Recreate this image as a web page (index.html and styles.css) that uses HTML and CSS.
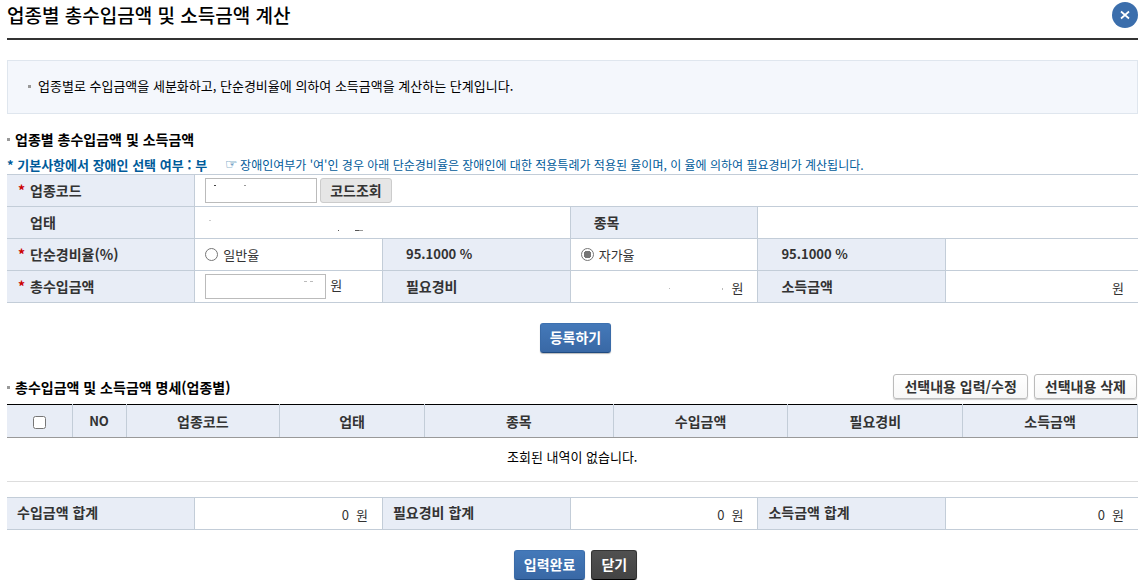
FILE: index.html
```html
<!DOCTYPE html>
<html lang="ko">
<head>
<meta charset="utf-8">
<title>업종별 총수입금액 및 소득금액 계산</title>
<link rel="stylesheet" href="styles.css">
</head>
<body>
<main class="page">
  <header class="page-header">
    <h1>업종별 총수입금액 및 소득금액 계산</h1>
    <button type="button" class="close" aria-label="닫기">
      <svg width="10" height="10" viewBox="0 0 10 10"><path d="M1 1.500L9 8.500M9 1.500L1 8.500" stroke="#fff" stroke-width="1.7" fill="none"/></svg>
    </button>
  </header>

  <div class="guide"><p>업종별로 수입금액을 세분화하고, 단순경비율에 의하여 소득금액을 계산하는 단계입니다.</p></div>

  <form>
    <h2 class="section-title">업종별 총수입금액 및 소득금액</h2>
    <p class="notice"><strong>* 기본사항에서 장애인 선택 여부 : 부</strong><span class="hand">☞</span><span>장애인여부가 '여'인 경우 아래 단순경비율은 장애인에 대한 적용특례가 적용된 율이며, 이 율에 의하여 필요경비가 계산됩니다.</span></p>

    <table class="form-table">
      <colgroup><col span="5" class="sixth"><col></colgroup>
      <tr>
        <th scope="row" class="required"><label for="code">업종코드</label></th>
        <td colspan="5"><div class="field"><input type="text" id="code" class="text code"><button type="button" class="btn lookup">코드조회</button></div></td>
      </tr>
      <tr>
        <th scope="row">업태</th>
        <td colspan="2"><svg class="trace" width="160" height="16" viewBox="0 0 160 16"><path d="M4 4.500h2" stroke="#ccc"/><path d="M133 14.500h1M150 14.500h4" stroke="#555"/><path d="M154 14.500h4" stroke="#999"/></svg></td>
        <th scope="row">종목</th>
        <td colspan="2"></td>
      </tr>
      <tr>
        <th scope="row" class="required">단순경비율(%)</th>
        <td><label class="choice"><input type="radio" name="rate">일반율</label></td>
        <th class="rate">95.1000 %</th>
        <td><label class="choice"><input type="radio" name="rate" checked>자가율</label></td>
        <th class="rate">95.1000 %</th>
        <td></td>
      </tr>
      <tr>
        <th scope="row" class="required"><label for="income">총수입금액</label></th>
        <td><div class="field"><input type="text" id="income" class="text income"><span class="unit">원</span></div></td>
        <th scope="row">필요경비</th>
        <td class="amount"><svg class="specks" width="54" height="6" viewBox="0 0 54 6"><path d="M0 2.500h1M53 2.500h1M53 3.500h1" stroke="#bbb"/></svg>원</td>
        <th scope="row">소득금액</th>
        <td class="amount">원</td>
      </tr>
    </table>
    <div class="buttons"><button type="button" class="btn primary">등록하기</button></div>
  </form>

  <section>
    <div class="list-head">
      <h2 class="section-title">총수입금액 및 소득금액 명세(업종별)</h2>
      <div class="actions">
        <button type="button" class="btn plain">선택내용 입력/수정</button>
        <button type="button" class="btn plain">선택내용 삭제</button>
      </div>
    </div>
    <table class="list">
      <colgroup><col class="c-check"><col class="c-no"><col class="c-code"><col class="c-type"><col class="c-item"><col class="c-sum"><col class="c-sum"><col class="c-sum"></colgroup>
      <thead>
        <tr>
          <th><input type="checkbox" aria-label="전체 선택"></th>
          <th class="no">NO</th><th>업종코드</th><th>업태</th><th>종목</th><th>수입금액</th><th>필요경비</th><th>소득금액</th>
        </tr>
      </thead>
      <tbody><tr><td colspan="8">조회된 내역이 없습니다.</td></tr></tbody>
    </table>
    <table class="form-table totals">
      <colgroup><col span="5" class="sixth"><col></colgroup>
      <tr>
        <th scope="row">수입금액 합계</th><td class="amount"><span class="value">0</span>원</td>
        <th scope="row">필요경비 합계</th><td class="amount"><span class="value">0</span>원</td>
        <th scope="row">소득금액 합계</th><td class="amount"><span class="value">0</span>원</td>
      </tr>
    </table>
  </section>
  <div class="buttons"><button type="button" class="btn primary">입력완료</button><button type="button" class="btn dark">닫기</button></div>
</main>
</body>
</html>
```

FILE: styles.css
```css
* { box-sizing: border-box; }

body {
  margin: 0;
  background: #fff;
  color: #333;
  font: 13px/18px "Noto Sans CJK KR", "Noto Sans", sans-serif;
}

h1, h2, p { margin: 0; }

.page { padding: 0 7px; }

.page-header {
  display: flex;
  justify-content: space-between;
  align-items: flex-start;
  height: 40px;
  border-bottom: 2px solid #333;
}

h1 {
  color: #000;
  font-size: 19px;
  font-weight: 500;
  line-height: 30px;
}

.close {
  display: grid;
  place-items: center;
  width: 26px;
  height: 26px;
  margin-top: 2px;
  padding: 0;
  border: 0;
  border-radius: 50%;
  background: #3b6eac;
}

.guide {
  margin-top: 20px;
  padding: 16px 20px 18px;
  border: 1px solid #dfe6ee;
  background: #f4f7fc;
  color: #000;
}

.guide p,
.section-title {
  display: flex;
  align-items: center;
}

.guide p::before,
.section-title::before {
  content: "";
  width: 3px;
  height: 3px;
  background: #999;
}

.guide p::before { margin-right: 7px; }

.section-title {
  color: #000;
  font-size: 14px;
  line-height: 18px;
}

.section-title::before { margin-right: 5px; }

form .section-title { margin-top: 16px; }

.notice {
  display: flex;
  align-items: center;
  margin-top: 8px;
  padding-bottom: 1px;
  color: #005b9a;
  font-size: 12px;
  line-height: 17px;
  white-space: nowrap;
}

.notice strong { font-size: 13px; }

.hand {
  width: 15px;
  margin-left: 18px;
  font-family: "DejaVu Sans", sans-serif;
  font-size: 14px;
  font-weight: bold;
}

table {
  width: 100%;
  border-collapse: collapse;
  table-layout: fixed;
}

.form-table th,
.form-table td {
  height: 32px;
  padding: 0 10px;
  border: solid #c3cdd8;
  border-width: 1px 0;
  text-align: left;
}

.form-table th {
  padding: 0 0 2px 23px;
  background: #e8edf6;
  font-size: 14px;
}

.form-table th + td,
.form-table td + th { border-left-width: 1px; }

.form-table .required { padding-left: 11px; }

.form-table .rate { font-size: 13px; }

.required::before {
  content: "*";
  display: inline-block;
  width: 12px;
  color: #c00;
}

.sixth { width: 16.6%; }

.field {
  display: flex;
  align-items: center;
  gap: 3px;
}

.text {
  height: 25px;
  border: 1px solid #bbb;
  background: #fff no-repeat;
  font: inherit;
}

.code {
  width: 112px;
  background-image: linear-gradient(#444, #444), linear-gradient(#999, #999);
  background-size: 2px 1px;
  background-position: 8px 6px, 38px 6px;
}

.income {
  width: 121px;
  background-image: linear-gradient(#bbb, #bbb), linear-gradient(#bbb, #bbb);
  background-size: 3px 1px;
  background-position: 98px 6px, 104px 6px;
}

.trace, .specks { display: inline-block; vertical-align: middle; }
.specks { margin-right: 8px; }

.choice {
  display: flex;
  align-items: center;
  gap: 5px;
}

.choice input {
  appearance: none;
  width: 13px;
  height: 13px;
  margin: 0;
  border: 1px solid #767676;
  border-radius: 50%;
}

.choice input:checked {
  background: radial-gradient(circle, #767676 4px, #fff 4px);
}

.form-table .amount {
  padding: 2px 14px 0 0;
  text-align: right;
}

.value { margin-right: 7px; }

.unit { margin: 0 1px 3px; }

.btn {
  padding: 0 9px 2px;
  border: 1px solid;
  border-radius: 3px;
  color: #333;
  font: bold 14px/18px "Noto Sans CJK KR", "Noto Sans", sans-serif;
  white-space: nowrap;
}

.lookup {
  height: 25px;
  border-color: #ccc;
  background: #e6e6e6;
}

.buttons {
  display: flex;
  justify-content: center;
  gap: 6px;
  margin-top: 20px;
  padding-left: 6px;
}

.buttons .btn {
  height: 30px;
  color: #fff;
}

.primary {
  border-color: #3d71b0 #3a6ba8 #1f4a80;
  background: linear-gradient(#4479b9, #3968a5);
  box-shadow: 0 1px 1px #bbb;
}

.dark {
  border-color: #333 #333 #000;
  background: linear-gradient(#505050, #434343);
  box-shadow: 0 1px 1px #bbb;
}

.list-head {
  display: flex;
  justify-content: space-between;
  align-items: flex-end;
  margin-top: 21px;
  padding-bottom: 5px;
}

.list-head .section-title { line-height: 24px; }

.actions {
  display: flex;
  gap: 6px;
  padding-right: 1px;
}

.plain {
  height: 25px;
  padding: 0 10px 2px;
  border-color: #bbb;
  background: linear-gradient(#fff, #f7f7f7);
  box-shadow: 0 1px 1px #ccc;
}

.list { border-top: 1px solid #000; }

.list th {
  height: 33px;
  padding: 0;
  border-bottom: 1px solid #999;
  border-right: 1px solid #c3cdd8;
  background: #e8edf6;
  font-size: 14px;
}

.list .no { font-size: 13px; }

.list th input {
  display: block;
  width: 13px;
  height: 13px;
  margin: 2px auto 0;
}

.list td {
  height: 44px;
  padding: 0 0 6px;
  border-bottom: 1px solid #ddd;
  color: #000;
  text-align: center;
}

.c-check { width: 65px; }
.c-no { width: 54px; }
.c-code { width: 13.6%; }
.c-type { width: 12.8%; }
.c-item { width: 16.7%; }

.totals { margin-top: 15px; }

.form-table.totals th { padding: 0 0 4px 10px; }
```
